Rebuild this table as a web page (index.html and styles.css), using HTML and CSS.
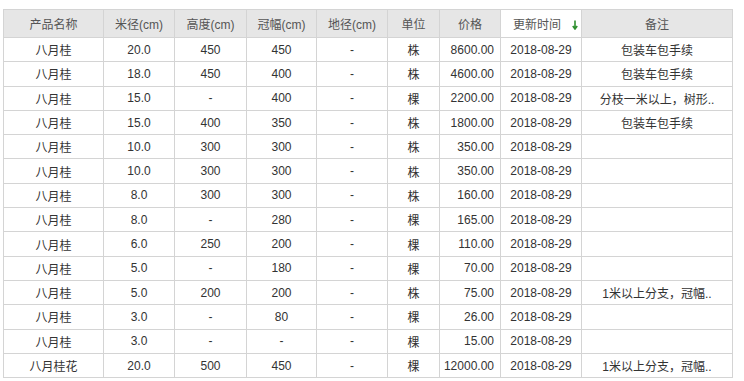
FILE: index.html
```html
<!DOCTYPE html>
<html lang="zh">
<head>
<meta charset="utf-8">
<title>价格表</title>
<link rel="stylesheet" href="styles.css">
</head>
<body>
<table class="grid">
<colgroup>
<col class="c1"><col class="c2"><col class="c3"><col class="c4"><col class="c5"><col class="c6"><col class="c7"><col class="c8"><col class="c9">
</colgroup>
<thead>
<tr>
<th>产品名称</th><th>米径(cm)</th><th>高度(cm)</th><th>冠幅(cm)</th><th>地径(cm)</th><th>单位</th><th>价格</th>
<th class="sorted"><span class="sort-label">更新时间</span><svg class="sort-arrow" width="6" height="10" viewBox="0 0 6 10"><path d="M3 0.5V8.5M0.8 6L3 9L5.2 6" fill="none" stroke="#2f8f2f" stroke-width="1.6"/></svg></th>
<th>备注</th>
</tr>
</thead>
<tbody>
<tr><td>八月桂</td><td>20.0</td><td>450</td><td>450</td><td>-</td><td>株</td><td class="price">8600.00</td><td>2018-08-29</td><td>包装车包手续</td></tr>
<tr><td>八月桂</td><td>18.0</td><td>450</td><td>400</td><td>-</td><td>株</td><td class="price">4600.00</td><td>2018-08-29</td><td>包装车包手续</td></tr>
<tr><td>八月桂</td><td>15.0</td><td>-</td><td>400</td><td>-</td><td>棵</td><td class="price">2200.00</td><td>2018-08-29</td><td>分枝一米以上，树形..</td></tr>
<tr><td>八月桂</td><td>15.0</td><td>400</td><td>350</td><td>-</td><td>株</td><td class="price">1800.00</td><td>2018-08-29</td><td>包装车包手续</td></tr>
<tr><td>八月桂</td><td>10.0</td><td>300</td><td>300</td><td>-</td><td>株</td><td class="price">350.00</td><td>2018-08-29</td><td></td></tr>
<tr><td>八月桂</td><td>10.0</td><td>300</td><td>300</td><td>-</td><td>株</td><td class="price">350.00</td><td>2018-08-29</td><td></td></tr>
<tr><td>八月桂</td><td>8.0</td><td>300</td><td>300</td><td>-</td><td>株</td><td class="price">160.00</td><td>2018-08-29</td><td></td></tr>
<tr><td>八月桂</td><td>8.0</td><td>-</td><td>280</td><td>-</td><td>棵</td><td class="price">165.00</td><td>2018-08-29</td><td></td></tr>
<tr><td>八月桂</td><td>6.0</td><td>250</td><td>200</td><td>-</td><td>棵</td><td class="price">110.00</td><td>2018-08-29</td><td></td></tr>
<tr><td>八月桂</td><td>5.0</td><td>-</td><td>180</td><td>-</td><td>棵</td><td class="price">70.00</td><td>2018-08-29</td><td></td></tr>
<tr><td>八月桂</td><td>5.0</td><td>200</td><td>200</td><td>-</td><td>株</td><td class="price">75.00</td><td>2018-08-29</td><td>1米以上分支，冠幅..</td></tr>
<tr><td>八月桂</td><td>3.0</td><td>-</td><td>80</td><td>-</td><td>棵</td><td class="price">26.00</td><td>2018-08-29</td><td></td></tr>
<tr><td>八月桂</td><td>3.0</td><td>-</td><td>-</td><td>-</td><td>棵</td><td class="price">15.00</td><td>2018-08-29</td><td></td></tr>
<tr><td>八月桂花</td><td>20.0</td><td>500</td><td>450</td><td>-</td><td>棵</td><td class="price">12000.00</td><td>2018-08-29</td><td>1米以上分支，冠幅..</td></tr>
</tbody>
</table>
</body>
</html>
```

FILE: styles.css
```css
html, body {
  margin: 0;
  background: #fff;
}
body {
  padding: 9px 0 0 3px;
  font-family: "Liberation Sans", Arial, "Noto Sans CJK SC", sans-serif;
  font-size: 12px;
  color: #333;
}
.grid {
  border-collapse: collapse;
  table-layout: fixed;
  width: 729px;
}
.c1 { width: 100px; }
.c2 { width: 71px; }
.c3 { width: 72px; }
.c4 { width: 70px; }
.c5 { width: 71px; }
.c6 { width: 52px; }
.c7 { width: 61px; }
.c8 { width: 81px; }
.c9 { width: 151px; }
.grid th,
.grid td {
  border: 1px solid #d4d4d4;
  padding: 0 2px;
  text-align: center;
  white-space: nowrap;
  overflow: hidden;
}
.grid th {
  height: 27px;
  background: #e6e6e6;
  font-weight: normal;
  color: #555;
}
.grid th.sorted {
  background: #fff;
  position: relative;
}
.sort-label {
  padding-right: 8px;
}
.sort-arrow {
  position: absolute;
  right: 3px;
  top: 10px;
}
.grid td {
  height: 23.3px;
  color: #333;
}
.grid td.price {
  text-align: right;
  padding-right: 6px;
}
```
